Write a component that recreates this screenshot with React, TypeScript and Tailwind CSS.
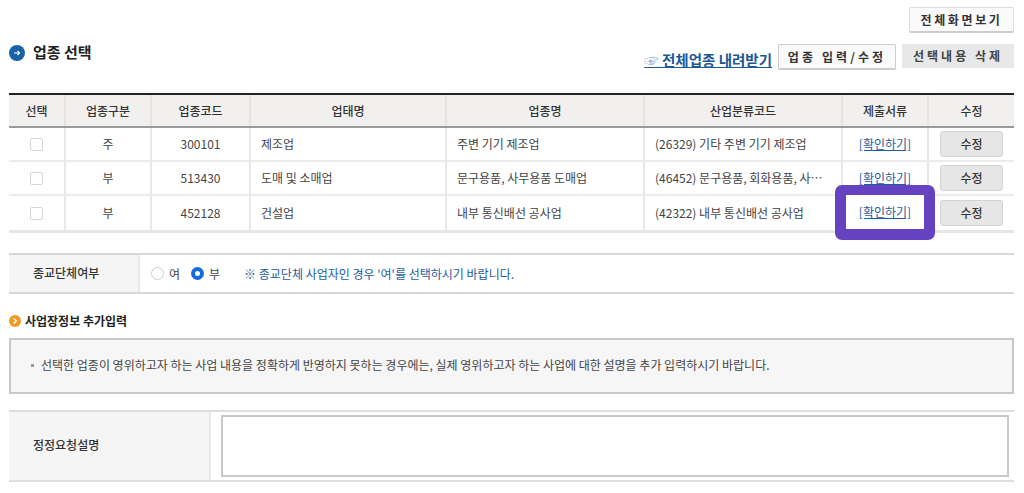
const rows = [
  { kind: "주", code: "300101", biz: "제조업", name: "주변 기기 제조업", ind: "(26329) 기타 주변 기기 제조업" },
  { kind: "부", code: "513430", biz: "도매 및 소매업", name: "문구용품, 사무용품 도매업", ind: "(46452) 문구용품, 회화용품, 사무용품 도매업" },
  { kind: "부", code: "452128", biz: "건설업", name: "내부 통신배선 공사업", ind: "(42322) 내부 통신배선 공사업" },
];
const headers = ["선택", "업종구분", "업종코드", "업태명", "업종명", "산업분류코드", "제출서류", "수정"];
const grid = "grid grid-cols-[57px_86px_99px_196px_198px_198px_86px_85px]";

export default function App() {
  return (
    <div className="relative w-[1024px] h-[493px] overflow-hidden bg-white px-[9px] pr-[10px] text-[12px] text-[#444] font-['Noto_Sans_CJK_KR','Noto_Sans',sans-serif]">
      <div className="flex justify-end pt-[7px]">
        <button className="w-[105px] h-[26px] bg-[#fafafa] border border-[#ddd] border-b-2 border-b-[#ccc] rounded-[2px] font-semibold text-[12px] tracking-[2.6px] text-[#333]">전체화면보기</button>
      </div>
      <div className="flex items-start mt-[11px]">
        <div className="flex items-center gap-[8px] -mt-[2px]">
          <svg width="16" height="16" viewBox="0 0 16 16" className="mt-[1px]">
            <circle cx="8" cy="8" r="8" fill="#1b62a8" />
            <path d="M5 8h5.5M8.5 6l2 2-2 2" stroke="#fff" strokeWidth="1.1" fill="none" />
          </svg>
          <span className="text-[15px] font-bold text-[#222] leading-[20px]">업종 선택</span>
        </div>
        <div className="ml-auto flex items-start">
          <a className="mt-[5px] text-[14.5px] font-bold text-[#1d5796] underline leading-[21px] mr-[6px]"><span className="text-[#8aa9c9] font-normal">☞ </span>전체업종 내려받기</a>
          <button className="w-[118px] h-[26px] bg-[#fafafa] border border-[#ccc] border-b-2 rounded-[2px] font-semibold text-[12px] tracking-[3.1px] text-[#333]">업종 입력/수정</button>
          <button className="ml-[6px] w-[112px] h-[24px] bg-[#e8e8e8] font-semibold text-[12px] tracking-[3px] text-[#444]">선택내용 삭제</button>
        </div>
      </div>

      <div className="mt-[23px] border-t-2 border-t-[#222] border-b-[3px] border-b-[#e6e6e6]">
        <div className={`${grid} h-[33px] bg-[#f1f0ef] border-b-2 border-b-[#9a9a9a] font-medium text-[#333]`}>
          {headers.map((h, i) => (
            <div key={h} className={`flex items-center justify-center ${i < 7 ? "border-r-2 border-r-[#e4e4e4]" : ""}`}>{h}</div>
          ))}
        </div>
        {rows.map((r, ri) => (
          <div key={r.code} className={`${grid} h-[34px] ${ri < 2 ? "border-b-2 border-b-[#ebebeb]" : ""}`}>
            <div className="flex items-center justify-center border-r-2 border-r-[#e8e8e8]">
              <span className="w-[13px] h-[13px] rounded-[2px] border border-[#d6d6d6] bg-white"></span>
            </div>
            <div className="flex items-center justify-center border-r-2 border-r-[#e8e8e8]">{r.kind}</div>
            <div className="flex items-center justify-center border-r-2 border-r-[#e8e8e8]">{r.code}</div>
            <div className="flex items-center pl-[10px] border-r-2 border-r-[#e8e8e8]">{r.biz}</div>
            <div className="flex items-center pl-[10px] border-r-2 border-r-[#e8e8e8]">{r.name}</div>
            <div className="flex items-center pl-[10px] pr-[14px] border-r-2 border-r-[#e8e8e8] min-w-0">
              <span className="truncate">{r.ind}</span>
            </div>
            <div className="flex items-center justify-center border-r-2 border-r-[#e8e8e8]">
              <a className="text-[#1d5c9e] underline">[확인하기]</a>
            </div>
            <div className="flex items-center justify-center">
              <button className="w-[63px] h-[26px] bg-[#e6e6e6] border border-[#d4d4d4] rounded-[3px] font-medium text-[#333]">수정</button>
            </div>
          </div>
        ))}
      </div>

      <div className="mt-[20px] h-[41px] flex border-y-2 border-y-[#d8d8d8]">
        <div className="w-[131px] bg-[#f5f5f5] border-r-2 border-r-[#e8e8e8] flex items-center pl-[24px] pb-[2px] font-medium text-[#333]">종교단체여부</div>
        <div className="flex items-center pl-[11px] text-[#444]">
          <span className="w-[13px] h-[13px] rounded-full border border-[#ccc] bg-white"></span>
          <span className="ml-[5px]">여</span>
          <span className="ml-[11px] w-[13px] h-[13px] rounded-full border-[4px] border-[#1668e3] bg-white"></span>
          <span className="ml-[5px]">부</span>
          <span className="ml-[24px] text-[#1d5c9e]">※ 종교단체 사업자인 경우 '여'를 선택하시기 바랍니다.</span>
        </div>
      </div>

      <div className="mt-[18px] flex items-center gap-[4px]">
        <svg width="12" height="12" viewBox="0 0 12 12">
          <circle cx="6" cy="6" r="6" fill="#ef9a22" />
          <path d="M4.8 3.5 7.3 6 4.8 8.5" stroke="#fff" strokeWidth="1.4" fill="none" />
        </svg>
        <span className="font-bold text-[#222] leading-[18px]">사업장정보 추가입력</span>
      </div>

      <div className="mt-[8px] h-[56px] bg-[#f6f6f6] border-2 border-[#c8c8c8] flex items-center pl-[20px] pb-[2px]">
        <span className="w-[3px] h-[3px] bg-[#999] mr-[7px]"></span>
        <span>선택한 업종이 영위하고자 하는 사업 내용을 정확하게 반영하지 못하는 경우에는, 실제 영위하고자 하는 사업에 대한 설명을 추가 입력하시기 바랍니다.</span>
      </div>

      <div className="mt-[16px] h-[72px] flex border-y-2 border-y-[#dedede]">
        <div className="w-[202px] bg-[#f5f5f5] border-r-2 border-r-[#e8e8e8] flex items-center pl-[24px] pb-[2px] font-medium text-[#333]">정정요청설명</div>
        <div className="flex-1 flex items-center pl-[10px] pr-[5px]">
          <div className="w-full h-[62px] border-2 border-[#c8c8c8] bg-white"></div>
        </div>
      </div>

      <div className="absolute left-[835px] top-[185px] w-[100px] h-[55px] border-x-[11px] border-t-[10px] border-b-[11px] border-[#6543c0] rounded-[7px] bg-white flex items-center justify-center">
        <a className="text-[#1d5c9e] underline">[확인하기]</a>
      </div>
    </div>
  );
}
